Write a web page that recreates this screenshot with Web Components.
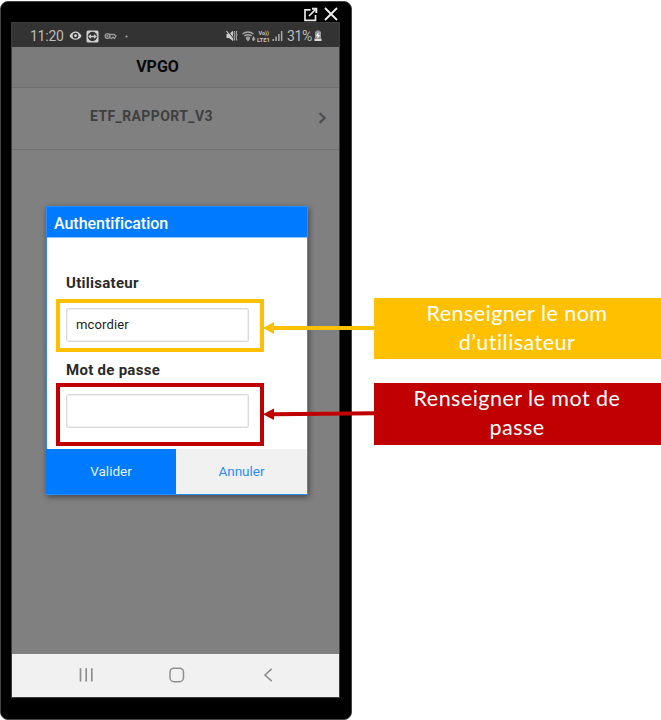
<!DOCTYPE html>
<html lang="fr">
<head>
<meta charset="utf-8">
<title>VPGO – Authentification</title>
<style>
html,body{margin:0;padding:0;background:#fff}
body{width:661px;height:720px;overflow:hidden;font-family:Roboto,"Liberation Sans",sans-serif}
</style>
</head>
<body>
<guide-page></guide-page>
<script>
const define = (name, html) => {
  const t = document.createElement('template');
  t.innerHTML = html;
  customElements.define(name, class extends HTMLElement {
    constructor() {
      super();
      this.attachShadow({mode: 'open'}).append(t.content.cloneNode(true));
    }
  });
};

define('status-bar', `<style>
:host{display:flex;align-items:center;height:24px;box-sizing:border-box;padding:2px 17px 0 18px;background:#333;color:#bcbcbc;font-size:14px;line-height:22px}
svg{display:block;flex:none}
.sp{flex:1}
.t{width:34px;letter-spacing:-.25px;white-space:nowrap}
.p{width:25px;letter-spacing:-.4px;white-space:nowrap}
</style>
<span class="t">11:20</span>
<svg style="margin-left:5px" width="13" height="12" viewBox="0 0 13 12"><path d="M.5 6C3-.1 10-.1 12.500 6 10 11.100 3 11.100.500 6Z" fill="#d4d4d4"/><circle cx="6.500" cy="5.700" r="2.900" fill="#333"/><circle cx="6.500" cy="5.700" r="1.400" fill="#ddd"/></svg>
<svg style="margin-left:4px" width="13" height="13" viewBox="0 0 13 13"><rect x=".5" y=".5" width="12" height="12" rx="1.500" fill="#d0d0d0"/><circle cx="6.500" cy="6.500" r="4.700" fill="#333"/><path d="M2 6.500 5 4.300V5.700H8V4.300L11 6.500 8 8.700V7.300H5V8.700Z" fill="#ccc"/></svg>
<svg style="margin-left:5px" width="13" height="8" viewBox="0 0 13 8" fill="none" stroke="#999" stroke-width="1.300"><circle cx="3.500" cy="4" r="2.400"/><circle cx="3.500" cy="4" r=".5"/><path d="M5.600 2.500H10L12 4 10.500 6.500 9 5.200 7.500 6.500 5.600 5.400"/></svg>
<svg style="margin-left:8px" width="3" height="3"><circle cx="1.500" cy="1.500" r="1.100" fill="#aaa"/></svg>
<span class="sp"></span>
<svg width="12" height="12" viewBox="0 0 12 12"><path d="M.5 4H3L7 .8V11L3 8H.500Z" fill="#ccc"/><path d="M1.500.5 8 9" stroke="#333"/><path d="M.5 1 7.200 10.300" stroke="#ccc" stroke-width="1.200"/><path d="M8.700 1 8 3 9 5 8 7 8.800 10.500M10.800 1 10.100 3 11.100 5 10.100 7 10.900 10.500" fill="none" stroke="#bbb"/></svg>
<svg style="margin-left:4px" width="14" height="12" viewBox="0 0 14 12" fill="none" stroke="#aaa" stroke-width="1.400"><path d="M.5 4Q6 .1 11.500 4M2.300 6Q6 3.400 9.700 6M4.100 8Q6 6.600 7.900 8"/><path d="M5 9 6 10.300 7 9Z" fill="#aaa"/><path d="M11.500 6.500V11M10 9H13.200" stroke-width="1.500"/></svg>
<svg style="margin-left:1px" width="14" height="13" viewBox="0 0 14 13" fill="#c4c4c4" font-family="Roboto" font-weight="700" font-size="6"><text x="1.500" y="5" textLength="10.500" lengthAdjust="spacingAndGlyphs">Vo))</text><text x="0" y="12.300" textLength="13" lengthAdjust="spacingAndGlyphs">LTE1</text></svg>
<svg style="margin-left:1px" width="11" height="12" viewBox="0 0 11 12" fill="#aaa"><path d="M.5 9H2V11H.500ZM3.300 6.500H4.800V11H3.300ZM6.100 4H7.600V11H6.100ZM8.900 1H10.400V11H8.900Z"/></svg>
<span class="p" style="margin-left:4px">31%</span>
<svg style="margin-left:2px" width="8" height="12" viewBox="0 0 8 12"><path d="M2.500.5H5.500V1.500H7V8H1V1.500H2.500Z" fill="#999"/><path d="M.5 8.500H7.500V11H.500Z" fill="#ddd"/><path d="M4.500 2 2 6H3.700L3 9 6 5H4.300Z" fill="#fff"/></svg>`);

define('nav-bar', `<style>
:host{display:flex;align-items:center;justify-content:space-between;height:43px;box-sizing:border-box;padding:0 66px 2px 66px;background:#f1f1f1}
svg{display:block}
.h{margin-right:3px}
</style>
<svg width="16" height="16" viewBox="0 0 16 16" stroke="#8e8e8e" stroke-width="1.700"><path d="M2.500 1.200V14.500M8.200 1.200V14.500M13.800 1.200V14.500"/></svg>
<svg class="h" width="16" height="16" viewBox="0 0 16 16" fill="none" stroke="#8e8e8e" stroke-width="1.500"><rect x="1" y="1.200" width="13.500" height="13.500" rx="4"/></svg>
<svg width="10" height="16" viewBox="0 0 10 16" fill="none" stroke="#8e8e8e" stroke-width="1.600"><path d="M8.700 1.800 2 8 8.700 14.200"/></svg>`);

define('list-row', `<style>
:host{display:flex;align-items:center;justify-content:space-between;height:62px;box-sizing:border-box;padding:0 12px 5px 78px;border-bottom:1px solid #717171;font-size:14px;font-weight:700;color:#3f3f3f;letter-spacing:.4px}
svg{display:block;margin-top:4px}
</style><span><slot></slot></span>
<svg width="9" height="14" viewBox="0 0 9 14" fill="none" stroke="#4c4e54" stroke-width="2.400"><path d="M1.500 2 6.600 7 1.500 12"/></svg>`);

define('high-light', `<style>
:host{display:block;box-sizing:border-box;width:208px;border:4px solid var(--c)}
</style><slot></slot>`);

define('text-field', `<style>
:host{display:flex;align-items:center;width:183px;height:34px;box-sizing:border-box;border:1px solid #dadada;box-shadow:inset 0 0 0 1px #f0f0f0;border-radius:2px;padding:0 0 2px 9px;background:#fff;font-size:13px;color:#222;letter-spacing:.15px}
</style><slot></slot>`);

define('auth-dialog', `<style>
:host{display:block;width:262px;height:289px;box-sizing:border-box;border:1px solid #2d8cff;background:#fff;box-shadow:1px 2px 6px rgba(0,0,0,.45)}
header{height:30px;line-height:33px;background:#007aff;color:#fff;font-size:16px;font-weight:500;padding-left:7px;border-bottom:1px solid #8cc3ff;letter-spacing:-.03px}
main{display:flex;flex-direction:column;height:211px;box-sizing:border-box;padding:35px 0 0 9px}
label{font-weight:700;font-size:15px;line-height:20px;color:#2a2a2a;padding-left:10px;letter-spacing:.28px}
.y{--c:#ffc000;height:53px;padding:5px 0 0 6px;margin-top:6px}
.r{--c:#c00000;height:63px;padding:7px 0 0 6px;margin-top:3px}
.l2{margin-top:8px}
footer{display:flex;height:45px;font-size:13.500px;line-height:44px;text-align:center}
.a{width:130px;margin-left:-1px;background:#007aff;color:#e6f2ff}
.b{flex:1;background:#f1f1f1;color:#2b8cfb}
</style>
<header><span>Authentification</span></header>
<main><label class="l1">Utilisateur</label><high-light class="y"><text-field>mcordier</text-field></high-light>
<label class="l2">Mot de passe</label><high-light class="r"><text-field></text-field></high-light></main>
<footer><div class="a">Valider</div><div class="b">Annuler</div></footer>`);

define('phone-frame', `<style>
:host{display:flex;flex-direction:column;width:352px;height:719px;box-sizing:border-box;margin-top:1px;border:1px solid #444;border-radius:8px;background:#000;padding:0 11px}
.top{display:flex;justify-content:flex-end;align-items:center;gap:6px;height:21px;padding:3px 2px 0 0;box-sizing:border-box}
svg{display:block}
.screen{display:flex;flex-direction:column;width:327px;height:674px;background:#808080;box-shadow:0 0 0 1px #3c3c3c}
.title{height:41px;box-sizing:border-box;border-bottom:1px solid #6f6f6f;background:#7b7b7b;text-align:center;font-size:16px;font-weight:700;line-height:39px;color:#080808;padding-right:36px}
.body{flex:1;padding:56px 0 0 34px}
</style>
<div class="top">
<svg width="15" height="15" viewBox="0 0 15 15" fill="none" stroke="#e8e8e8" stroke-width="1.700"><path d="M7.500 2.800H2V13.300H12.500V8"/><path d="M6 9 12.500 2.500"/><path d="M9 1.800H13.300V6" stroke-width="2"/></svg>
<svg width="14" height="14" viewBox="0 0 14 14" stroke="#eee" stroke-width="1.900"><path d="M1 1 13 13M13 1 1 13"/></svg>
</div>
<div class="screen"><status-bar></status-bar><div class="title">VPGO</div><list-row>ETF_RAPPORT_V3</list-row>
<div class="body"><auth-dialog></auth-dialog></div><nav-bar></nav-bar></div>`);

define('call-out', `<style>
:host{display:block;box-sizing:border-box;width:287px;background:var(--c);color:#fff;text-align:center;font-family:Lato,"Liberation Sans",sans-serif;font-size:21.500px;line-height:29px;padding:1px 1px 0 0;letter-spacing:.46px;white-space:nowrap}
</style><slot></slot>`);

define('guide-page', `<style>
:host{display:grid;grid-template-columns:352px 287px;column-gap:22px;position:relative;width:661px;height:720px;overflow:hidden}
.notes{display:flex;flex-direction:column;gap:24px;padding-top:298px}
.y{--c:#ffc000;height:61px}
.r{--c:#c00000;height:62px}
.arrows{position:absolute;left:0;top:0;pointer-events:none}
</style>
<phone-frame></phone-frame>
<div class="notes"><call-out class="y">Renseigner le nom<br>d’utilisateur</call-out><call-out class="r">Renseigner le mot de<br>passe</call-out></div>
<svg class="arrows" width="661" height="720"><path d="M273 328H375" stroke="#ffc000" stroke-width="4"/><path d="M263 328 274 322V334Z" fill="#ffc000"/><path d="M273 414.300 375 413.200" stroke="#c00000" stroke-width="4"/><path d="M263 414.200 274 408.500V420Z" fill="#c00000"/></svg>`);
</script>
</body>
</html>
